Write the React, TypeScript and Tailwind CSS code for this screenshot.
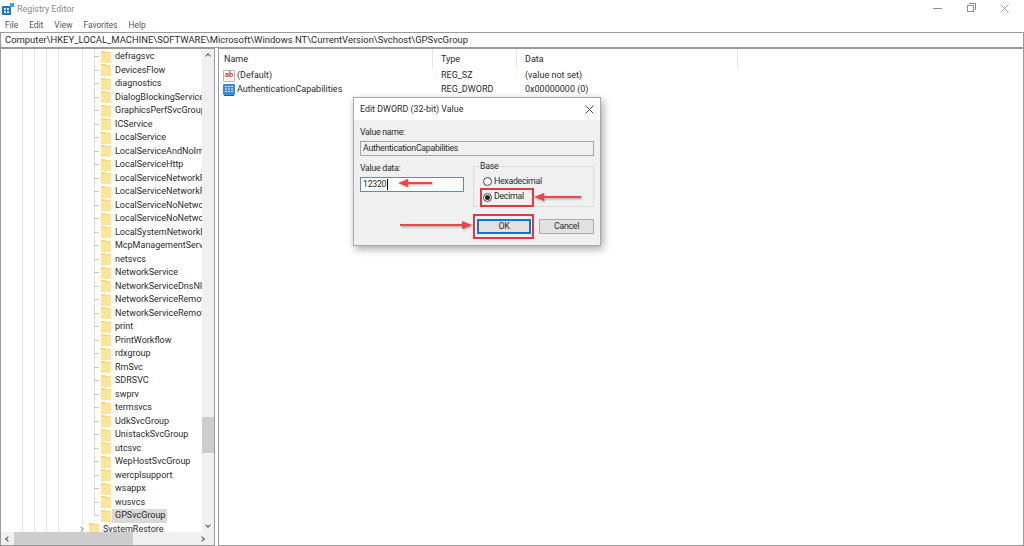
const TREE_ITEMS = [
  'defragsvc',
  'DevicesFlow',
  'diagnostics',
  'DialogBlockingService',
  'GraphicsPerfSvcGroup',
  'ICService',
  'LocalService',
  'LocalServiceAndNoImpersonation',
  'LocalServiceHttp',
  'LocalServiceNetworkRestricted',
  'LocalServiceNetworkFirewall',
  'LocalServiceNoNetwork',
  'LocalServiceNoNetworkFirewall',
  'LocalSystemNetworkRestricted',
  'McpManagementService',
  'netsvcs',
  'NetworkService',
  'NetworkServiceDnsNI',
  'NetworkServiceRemoteForwarding',
  'NetworkServiceRemoteDesktop',
  'print',
  'PrintWorkflow',
  'rdxgroup',
  'RmSvc',
  'SDRSVC',
  'swprv',
  'termsvcs',
  'UdkSvcGroup',
  'UnistackSvcGroup',
  'utcsvc',
  'WepHostSvcGroup',
  'wercplsupport',
  'wsappx',
  'wusvcs',
];

function Folder() {
  return (
    <svg width="10" height="12" viewBox="0 0 10 12" className="shrink-0">
      <path d="M0 0h4l1 1h5v11H0z" fill="#f6d67a" />
      <path d="M0 2h10v10H0z" fill="#fde497" />
    </svg>
  );
}

function Arrow({ className, width }: { className: string; width: number }) {
  return (
    <svg width={width} height="10" viewBox={`0 0 ${width} 10`} className={`absolute drop-shadow-[1px_1px_1px_rgba(0,0,0,0.35)] ${className}`}>
      <rect x="7" y="4" width={width - 7} height="2" fill="#e8474c" />
      <path d="M0 5 10 1V9z" fill="#e8474c" />
    </svg>
  );
}

function ArrowRight({ className, width }: { className: string; width: number }) {
  return (
    <svg width={width} height="10" viewBox={`0 0 ${width} 10`} className={`absolute drop-shadow-[1px_1px_1px_rgba(0,0,0,0.35)] ${className}`}>
      <rect x="0" y="4" width={width - 7} height="2" fill="#e8474c" />
      <path d={`M${width} 5 ${width - 10} 1V9z`} fill="#e8474c" />
    </svg>
  );
}

function TreeRow({ label }: { label: string }) {
  return (
    <div className="flex h-[13.5px] items-center whitespace-nowrap pl-[93px]">
      <span className="mr-[2px] h-px w-[5px] shrink-0 bg-[#c8c8c8]" />
      <Folder />
      <span className="ml-[4px]">{label}</span>
    </div>
  );
}

function Tree() {
  return (
    <div className="relative h-full w-[215px] shrink-0 overflow-hidden border border-[#9a9a9a] bg-white">
      {/* guide lines */}
      <span className="absolute left-[21px] top-0 h-full w-px bg-[#e4e4e4]" />
      <span className="absolute left-[33px] top-0 h-full w-px bg-[#e4e4e4]" />
      <span className="absolute left-[45px] top-0 h-full w-px bg-[#e4e4e4]" />
      <span className="absolute left-[57px] top-0 h-full w-px bg-[#e4e4e4]" />
      <span className="absolute left-[81px] top-0 h-full w-px bg-[#e4e4e4]" />
      <span className="absolute left-[93px] top-0 h-[467px] w-px bg-[#dcdcdc]" />

      <div className="relative w-[202px] overflow-hidden pt-[1px] text-[9px] text-[#2b2b2b]">
        {TREE_ITEMS.map(item => (
          <TreeRow key={item} label={item} />
        ))}
        <div className="flex h-[13.5px] items-center whitespace-nowrap pl-[93px]">
          <span className="mr-[2px] h-px w-[5px] shrink-0 bg-[#c8c8c8]" />
          <Folder />
          <span className="ml-[1px] bg-[#d9d9d9] pl-[3px] pr-[2px]">GPSvcGroup</span>
        </div>
        <div className="flex h-[13.5px] items-center whitespace-nowrap pl-[78px]">
          <span className="mr-[6px] h-[4px] w-[4px] rotate-45 border-r border-t border-[#a0a0a0]" />
          <Folder />
          <span className="ml-[4px]">SystemRestore</span>
        </div>
      </div>

      {/* vertical scrollbar */}
      <div className="absolute bottom-[13px] right-0 top-0 flex w-[12px] flex-col items-center justify-between bg-[#f0f0f0]">
        <span className="mt-[4px] h-[4px] w-[4px] translate-y-[1px] rotate-45 border-l border-t border-[#555]" />
        <span className="absolute left-0 top-[368px] h-[36px] w-full bg-[#cdcdcd]" />
        <span className="mb-[5px] h-[4px] w-[4px] rotate-45 border-b border-r border-[#555]" />
      </div>
      {/* horizontal scrollbar */}
      <div className="absolute bottom-0 left-0 right-0 flex h-[13px] items-center justify-between bg-[#f0f0f0] px-[5px]">
        <span className="h-[4px] w-[4px] rotate-45 border-b border-l border-[#555]" />
        <span className="absolute left-[13px] top-0 h-full w-[119px] bg-[#cdcdcd]" />
        <span className="mr-[5px] h-[4px] w-[4px] rotate-45 border-r border-t border-[#555]" />
      </div>
    </div>
  );
}

function ValuesPane() {
  return (
    <div className="h-full flex-1 border border-[#9a9a9a] bg-white text-[9px] text-[#2b2b2b]">
      <div className="flex h-[20px] items-center">
        <span className="w-[213px] pl-[5px] pt-[1px]">Name</span>
        <span className="h-full w-px bg-[#e5e5e5]" />
        <span className="w-[83px] pl-[8px] pt-[1px]">Type</span>
        <span className="h-full w-px bg-[#e5e5e5]" />
        <span className="w-[220px] pl-[8px] pt-[1px]">Data</span>
        <span className="h-full w-px bg-[#e5e5e5]" />
      </div>
      <div className="flex h-[14px] items-center">
        <span className="flex w-[214px] items-center pl-[4px]">
          <span className="mr-[2px] flex h-[12px] w-[12px] items-center justify-center rounded-[1px] border border-[#b5b5b5] pb-[2px] text-[7.5px] font-bold leading-none text-[#d8342e]">ab</span>
          (Default)
        </span>
        <span className="w-[84px] pl-[8px]">REG_SZ</span>
        <span className="pl-[8px]">(value not set)</span>
      </div>
      <div className="flex h-[14px] items-center">
        <span className="flex w-[214px] items-center pl-[4px]">
          <svg width="12" height="12" viewBox="0 0 12 12" className="mr-[2px] shrink-0">
            <rect width="12" height="11" rx="1" fill="#3d8bd8" />
            <path d="M2 2.5h2M5 2.5h2M8 2.5h2M2 5h2M5 5h2M8 5h2M2 7.5h2M5 7.5h2M8 7.5h2" stroke="#e8f2fb" strokeWidth="1.2" />
            <path d="M1 11.5h10" stroke="#1f5fa8" />
          </svg>
          AuthenticationCapabilities
        </span>
        <span className="w-[84px] pl-[8px]">REG_DWORD</span>
        <span className="pl-[8px]">0x00000000 (0)</span>
      </div>
    </div>
  );
}

function Dialog() {
  return (
    <div className="absolute left-[353px] top-[97px] h-[149px] w-[248px] border border-[#a9a9a9] bg-[#f0f0f0] text-[8.8px] tracking-[-0.3px] text-[#2b2b2b] shadow-[2px_3px_8px_rgba(0,0,0,0.35)]">
      <div className="flex h-[22px] items-center justify-between bg-white pl-[6px] pr-[6px] text-[8.9px] tracking-normal">
        <span className="pt-[1px]">Edit DWORD (32-bit) Value</span>
        <svg width="9" height="9" viewBox="0 0 9 9">
          <path d="M0.5 0.5l8 8M8.5 0.5l-8 8" stroke="#333" strokeWidth="0.9" />
        </svg>
      </div>

      <div className="px-[6px] pt-[6px]">
        <div className="h-[13px] leading-[13px]">Value name:</div>
        <div className="mt-[2px] flex h-[15px] items-center border border-[#a5a5a5] bg-[#f0f0f0] pl-[2px]">AuthenticationCapabilities</div>

        <div className="mt-[6px] flex">
          <div className="w-[104px]">
            <div className="h-[13px] leading-[13px]">Value data:</div>
            <div className="mt-[2px] flex h-[15px] items-center border border-[#4a90d9] bg-white pl-[2px]">
              12320<span className="ml-[1px] h-[11px] w-px bg-black" />
            </div>
          </div>
          <div className="relative ml-[9px] mt-[4px] h-[41px] flex-1 border border-[#dcdcdc]">
            <span className="absolute -top-[7px] left-[5px] bg-[#f0f0f0] px-[1px] leading-[13px]">Base</span>
            <div className="ml-[9px] mt-[7px] flex h-[15px] items-center gap-[2px]">
              <span className="h-[9px] w-[9px] rounded-full border border-[#444] bg-white" />
              Hexadecimal
            </div>
            <div className="ml-[9px] flex h-[16px] items-center gap-[2px]">
              <span className="flex h-[9px] w-[9px] items-center justify-center rounded-full border border-[#444] bg-white">
                <span className="h-[5px] w-[5px] rounded-full bg-[#222]" />
              </span>
              Decimal
            </div>
          </div>
        </div>

        <div className="mt-[12px] flex justify-end gap-[8px]">
          <div className="flex h-[15px] w-[54px] items-center justify-center border-2 border-[#0a78d7] bg-[#e1e1e1]">OK</div>
          <div className="flex h-[15px] w-[55px] items-center justify-center border border-[#adadad] bg-[#e1e1e1]">Cancel</div>
        </div>
      </div>
    </div>
  );
}

export default function App() {
  return (
    <div className="relative flex h-[546px] w-[1024px] flex-col overflow-hidden bg-white font-['Roboto','Open_Sans',sans-serif] text-[#2b2b2b]">
      <div className="flex h-[17px] items-center pl-[2px] text-[8.9px]">
        <svg width="12" height="12" viewBox="0 0 12 12" className="shrink-0">
          <path d="M0 3h9v9H0z" fill="#1f78c8" />
          <path d="M2 5h2v2H2zM5 5h2v2H5zM2 8h2v2H2zM5 8h2v2H5z" fill="#d4e8f7" />
          <path d="M8 0h4v4H8z" fill="#3aa0e0" />
        </svg>
        <span className="ml-[3px] pt-[2px] text-[#8a8a8a]">Registry Editor</span>
        <div className="ml-auto flex items-center">
          <span className="mr-[25px] h-px w-[9px] bg-[#8f8f8f]" />
          <span className="relative mr-[26px] h-[7px] w-[7px] border border-[#8f8f8f]">
            <span className="absolute -right-[3px] -top-[3px] h-[7px] w-[7px] border-r border-t border-[#8f8f8f]" />
          </span>
          <svg width="9" height="9" viewBox="0 0 9 9" className="mr-[15px]">
            <path d="M0.5 0.5l8 8M8.5 0.5l-8 8" stroke="#8f8f8f" strokeWidth="0.8" />
          </svg>
        </div>
      </div>

      <div className="flex h-[15px] items-center gap-[11px] pl-[5px] pt-[2px] text-[8.4px] text-[#555]">
        <span>File</span>
        <span>Edit</span>
        <span>View</span>
        <span>Favorites</span>
        <span>Help</span>
      </div>

      <div className="flex h-[16px] items-center border border-[#9a9a9a] pl-[4px] text-[9.45px]">
        Computer\HKEY_LOCAL_MACHINE\SOFTWARE\Microsoft\Windows NT\CurrentVersion\Svchost\GPSvcGroup
      </div>

      <div className="flex min-h-0 flex-1 gap-[3px]">
        <Tree />
        <ValuesPane />
      </div>

      <Dialog />

      {/* annotations */}
      <span className="absolute left-[480px] top-[188px] h-[19px] w-[54px] border-2 border-[#e2383f]" />
      <span className="absolute left-[473px] top-[214px] h-[25px] w-[61px] border-2 border-[#e2383f]" />
      <Arrow className="left-[398px] top-[178px]" width={34} />
      <Arrow className="left-[534px] top-[192px]" width={47} />
      <ArrowRight className="left-[400px] top-[220px]" width={72} />
    </div>
  );
}
